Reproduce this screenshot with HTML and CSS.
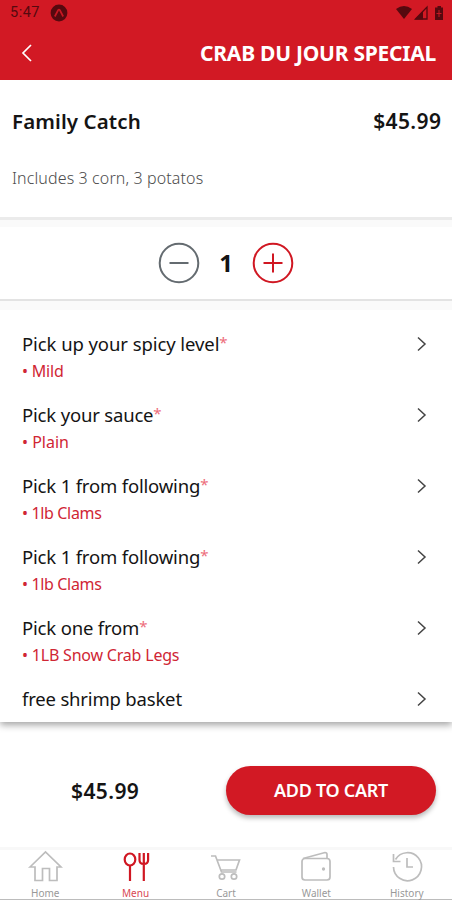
FILE: index.html
```html
<!DOCTYPE html>
<html lang="en">
<head>
<meta charset="utf-8">
<title>Crab Du Jour Special</title>
<link rel="stylesheet" href="styles.css">
</head>
<body>
<header class="header">
  <div class="status">
    <span class="clock">5:47</span>
    <svg class="app-dot" width="18" height="18" viewBox="0 0 18 18"><circle cx="9" cy="9" r="8.4" fill="#56090f"/><path d="M4.8 12.5 8.2 6q.8-1 1.6 0l3.4 6.5" fill="none" stroke="#c71823" stroke-width="1.7"/></svg>
    <svg class="signals" width="50" height="16" viewBox="0 0 50 16"><path d="M0 4Q8-2 16 4L8 14Z" fill="#56090f"/><path d="M19.5 14 31 2V14Z" fill="none" stroke="#56090f" stroke-width="1.3"/><path d="M19 14.5 27 6v8.5Z" fill="#56090f"/><path d="M39 2.5h2.5V1h3.500v1.500H47V15h-8Z" fill="#56090f"/><path d="M43 5v7M40.500 8.500h5" stroke="#c71823" stroke-width="1"/></svg>
  </div>
  <div class="titlebar">
    <svg width="12" height="18" viewBox="0 0 12 18"><path d="M10 1 2 9l8 8" fill="none" stroke="#fff" stroke-width="1.7"/></svg>
    <h1>CRAB DU JOUR SPECIAL</h1>
  </div>
</header>
<section class="intro">
  <div class="intro-row"><h2>Family Catch</h2><span class="price">$45.99</span></div>
  <p>Includes 3 corn, 3 potatos</p>
</section>
<section class="quantity">
  <svg width="42" height="42" viewBox="0 0 42 42" fill="none" stroke="#646b70" stroke-width="2"><circle cx="21" cy="21" r="19.300"/><path d="M11.500 21h19"/></svg>
  <span class="count">1</span>
  <svg width="42" height="42" viewBox="0 0 42 42" fill="none" stroke="#d01722" stroke-width="2"><circle cx="21" cy="21" r="19.300"/><path d="M11.500 21h19M21 11.500v19"/></svg>
</section>
<main class="options">
  <div class="option"><div><div class="name wide">Pick up your spicy level<i>*</i></div><div class="value">• Mild</div></div><svg class="chevron" width="10" height="16" viewBox="0 0 10 16"><path d="m1 1.500 7 6.500-7 6.500"/></svg></div>
  <div class="option"><div><div class="name">Pick your sauce<i>*</i></div><div class="value plain">• Plain</div></div><svg class="chevron" width="10" height="16" viewBox="0 0 10 16"><path d="m1 1.500 7 6.500-7 6.500"/></svg></div>
  <div class="option"><div><div class="name">Pick 1 from following<i>*</i></div><div class="value tight">• 1lb Clams</div></div><svg class="chevron" width="10" height="16" viewBox="0 0 10 16"><path d="m1 1.500 7 6.500-7 6.500"/></svg></div>
  <div class="option"><div><div class="name">Pick 1 from following<i>*</i></div><div class="value tight">• 1lb Clams</div></div><svg class="chevron" width="10" height="16" viewBox="0 0 10 16"><path d="m1 1.500 7 6.500-7 6.500"/></svg></div>
  <div class="option"><div><div class="name">Pick one from<i>*</i></div><div class="value">• 1LB Snow Crab Legs</div></div><svg class="chevron" width="10" height="16" viewBox="0 0 10 16"><path d="m1 1.500 7 6.500-7 6.500"/></svg></div>
  <div class="option"><div class="name">free shrimp basket</div><svg class="chevron" width="10" height="16" viewBox="0 0 10 16"><path d="m1 1.500 7 6.500-7 6.500"/></svg></div>
</main>
<section class="checkout">
  <span class="price">$45.99</span>
  <button>ADD TO CART</button>
</section>
<nav class="tabs">
  <a><svg width="36" height="34" viewBox="0 0 36 34"><path d="M3 17 18.500 2 34 17H30v13.500h-7.500V18.500h-7v12H8V17Z"/></svg>Home</a>
  <a class="active"><svg width="36" height="34" viewBox="0 0 36 34"><ellipse cx="12" cy="9.500" rx="5.300" ry="6"/><path d="M12 16v15M21.500 3v7q0 4 4.300 4t4.300-4V3M25.800 3v28"/></svg>Menu</a>
  <a><svg width="36" height="34" viewBox="0 0 36 34"><path d="M3 6h4.500l6 16h15M9.500 10h22l-3.500 10H12.500"/><circle cx="14" cy="26.500" r="2.700"/><circle cx="26" cy="26.500" r="2.700"/></svg>Cart</a>
  <a><svg width="36" height="34" viewBox="0 0 36 34"><rect x="4" y="8.500" width="28" height="21.500" rx="3"/><path d="M5 8.500 27 2.500q2 0 2 2v4"/><circle cx="25.500" cy="19" r=".8"/></svg>Wallet</a>
  <a><svg width="36" height="34" viewBox="0 0 36 34"><path d="M4.500 17A14 14 0 1 0 6.500 9.500M4.500 4v7.500h7M18 8v9h6"/></svg>History</a>
</nav>
</body>
</html>
```
FILE: styles.css
```css
* { box-sizing: border-box; }
body {
  margin: 0; height: 900px; overflow: hidden;
  display: flex; flex-direction: column;
  font-family: "Noto Sans", sans-serif; color: #141414; background: #fff;
}
h1, h2, p { margin: 0; }
.header { height: 80px; background: #d21924; flex: none; }
.status { height: 26px; display: flex; align-items: center; padding: 0 6px 0 10px; }
.clock { font: 14.500px/20px Roboto, sans-serif; letter-spacing: .5px; color: #56090f; width: 40px; }
.signals { margin-left: auto; }
.titlebar { height: 53px; display: flex; align-items: center; justify-content: space-between; padding: 0 16px 0 21px; color: #fff; }
.titlebar h1 { font-size: 21px; line-height: 30px; font-weight: 700; letter-spacing: -.25px; white-space: nowrap; }
.intro { height: 137px; flex: none; padding: 26px 11px 0 12px; }
.intro-row { display: flex; justify-content: space-between; line-height: 30px; }
h2 { font-size: 20.500px; font-weight: 600; letter-spacing: .1px; }
.price { font-size: 21px; font-weight: 600; letter-spacing: .4px; margin-right: -.4px; }
.intro p { margin-top: 30px; font-size: 16px; line-height: 24px; font-weight: 300; letter-spacing: .12px; color: #4c4c4c; }
.quantity {
  height: 84px; flex: none; border-top: 3px solid #ebebeb; border-bottom: 2px solid #e3e3e3;
  display: flex; align-items: center; justify-content: center; padding: 7px 0 0;
  background: linear-gradient(#fafafa 0 7px, #fff 7px);
}
.count { width: 52px; text-align: center; font-size: 24px; line-height: 34px; font-weight: 700; }
.options {
  height: 421px; flex: none; padding: 28px 25px 0 22px;
  background: linear-gradient(#fafafa 0 9px, #fff 9px);
  box-shadow: 0 3px 7px rgba(0, 0, 0, .36); clip-path: inset(0 0 -16px 0);
}
.option { height: 71px; display: flex; justify-content: space-between; align-items: flex-start; white-space: nowrap; }
.name { font-size: 18.500px; line-height: 30px; letter-spacing: -.18px; }
.name.wide { letter-spacing: -.08px; }
.name i { color: #ed6d7b; font-style: normal; font-size: 15px; line-height: 1; vertical-align: 3px; }
.value { font-size: 16px; line-height: 24px; letter-spacing: -.2px; color: #d02634; }
.value.plain { letter-spacing: 0; }
.value.tight { letter-spacing: -.35px; }
.chevron { margin-top: 7px; fill: none; stroke: #444; stroke-width: 1.500px; }
.checkout { height: 125px; flex: none; padding: 12px 16px 0 71px; display: flex; align-items: center; justify-content: space-between; }
button { width: 210px; height: 49px; border: 0; border-radius: 25px; background: #d21924; color: #fff; font: 600 18px/30px "Noto Sans", sans-serif; letter-spacing: -.3px; box-shadow: 0 3px 5px rgba(0, 0, 0, .28); padding: 0 0 1px; }
.tabs { height: 53px; margin-top: auto; flex: none; display: grid; grid-template-columns: repeat(5, 1fr); border-top: 3px solid #f8f8f8; border-bottom: 1px solid #bcbcbc; }
.tabs a { display: flex; flex-direction: column; align-items: center; font: 10px/18px "Noto Sans", sans-serif; color: #999; }
.tabs svg { flex: none; fill: none; stroke: #bdbdbd; stroke-width: 1.700px; }
.tabs .active { color: #d84852; }
.tabs .active svg { stroke: #d01722; stroke-width: 2.200px; }
```
